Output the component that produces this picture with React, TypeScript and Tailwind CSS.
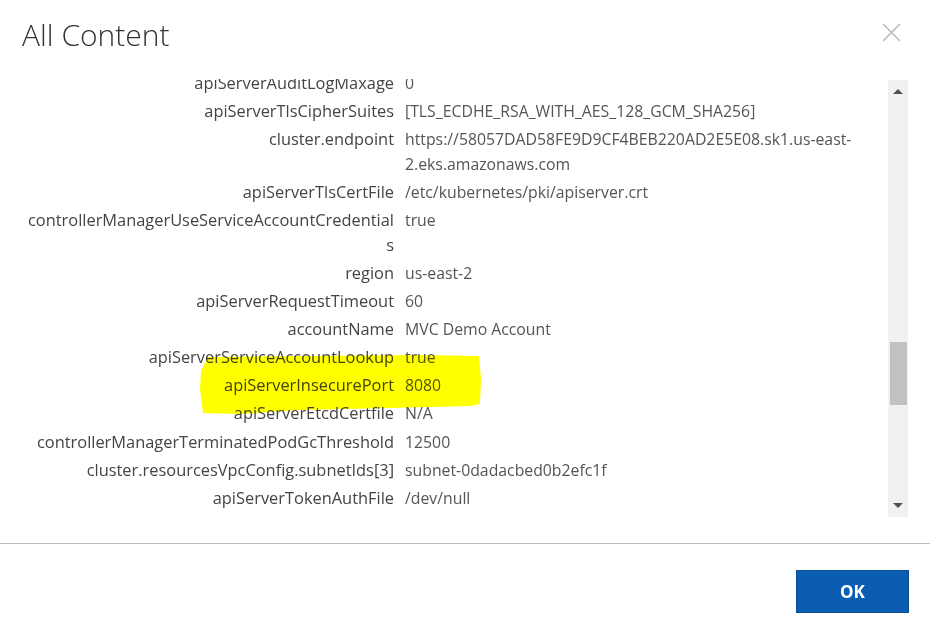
const rows: { label: string; value: string }[] = [
  { label: "apiServerAuditLogMaxage", value: "0" },
  { label: "apiServerTlsCipherSuites", value: "[TLS_ECDHE_RSA_WITH_AES_128_GCM_SHA256]" },
  {
    label: "cluster.endpoint",
    value: "https://58057DAD58FE9D9CF4BEB220AD2E5E08.sk1.us-east-2.eks.amazonaws.com",
  },
  { label: "apiServerTlsCertFile", value: "/etc/kubernetes/pki/apiserver.crt" },
  { label: "controllerManagerUseServiceAccountCredentials", value: "true" },
  { label: "region", value: "us-east-2" },
  { label: "apiServerRequestTimeout", value: "60" },
  { label: "accountName", value: "MVC Demo Account" },
  { label: "apiServerServiceAccountLookup", value: "true" },
  { label: "apiServerInsecurePort", value: "8080" },
  { label: "apiServerEtcdCertfile", value: "N/A" },
  { label: "controllerManagerTerminatedPodGcThreshold", value: "12500" },
  { label: "cluster.resourcesVpcConfig.subnetIds[3]", value: "subnet-0dadacbed0b2efc1f" },
  { label: "apiServerTokenAuthFile", value: "/dev/null" },
];

export default function App() {
  return (
    <div className="w-[930px] h-[631px] bg-white flex flex-col font-['Open_Sans',sans-serif] overflow-hidden">
      {/* header */}
      <div className="h-[79px] shrink-0 flex justify-between items-start pl-[22px] pr-[29px] pt-[13px]">
        <h1 className="text-[30px] font-light leading-[44px] text-[#333]">All Content</h1>
        <button className="mt-[10px] w-[19px] h-[19px] text-[#bbb]">
          <svg viewBox="0 0 19 19" className="w-[19px] h-[19px]" fill="none" stroke="currentColor" strokeWidth="1.6">
            <path d="M1 1 L18 18 M18 1 L1 18" />
          </svg>
        </button>
      </div>

      {/* body */}
      <div className="relative h-[464px] shrink-0 flex pb-[26px]">
        <div className="flex-1 overflow-hidden">
          <div className="-mt-[11px] flex flex-col">
            {rows.map((r) => (
              <div key={r.label} className="flex py-[1.55px] text-[16.4px] leading-[25px]">
                <div className="w-[366px] ml-[28px] shrink-0 text-right text-[#444] break-all">
                  {r.label}
                </div>
                <div className="ml-[11px] w-[470px] pt-[1px] -mb-[1px] text-[15.8px] text-[#555]">
                  {r.value}
                </div>
              </div>
            ))}
          </div>
        </div>

        {/* scrollbar */}
        <div className="w-[20px] mr-[22px] mt-[1px] bg-[#f1f1f1] flex flex-col items-center justify-between py-[9px]">
          <div className="w-0 h-0 border-l-[5px] border-r-[5px] border-b-[5px] border-l-transparent border-r-transparent border-b-[#505050]" />
          <div className="w-0 h-0 border-l-[5px] border-r-[5px] border-t-[5px] border-l-transparent border-r-transparent border-t-[#505050]" />
        </div>
        <div className="absolute left-[890px] top-[263px] w-[17px] h-[63px] bg-[#c1c1c1]" />

        {/* marker highlight */}
        <svg className="absolute left-0 top-0 w-[930px] h-[464px] pointer-events-none mix-blend-multiply" viewBox="0 0 930 464">
          <polygon
            fill="#ffff00"
            points="207,278 300,277 420,276 479,277 481,300 480,325 470,327 390,329 300,331 240,335 203,334 200,310 201,292 205,284"
          />
        </svg>
      </div>

      {/* footer */}
      <div className="flex-1 border-t border-[#bbb] flex justify-end items-start pt-[26px] pr-[21px]">
        <button className="w-[113px] h-[43px] bg-[#0a5db0] border border-[#0a4e95] text-white text-[17px] font-bold">
          OK
        </button>
      </div>
    </div>
  );
}
